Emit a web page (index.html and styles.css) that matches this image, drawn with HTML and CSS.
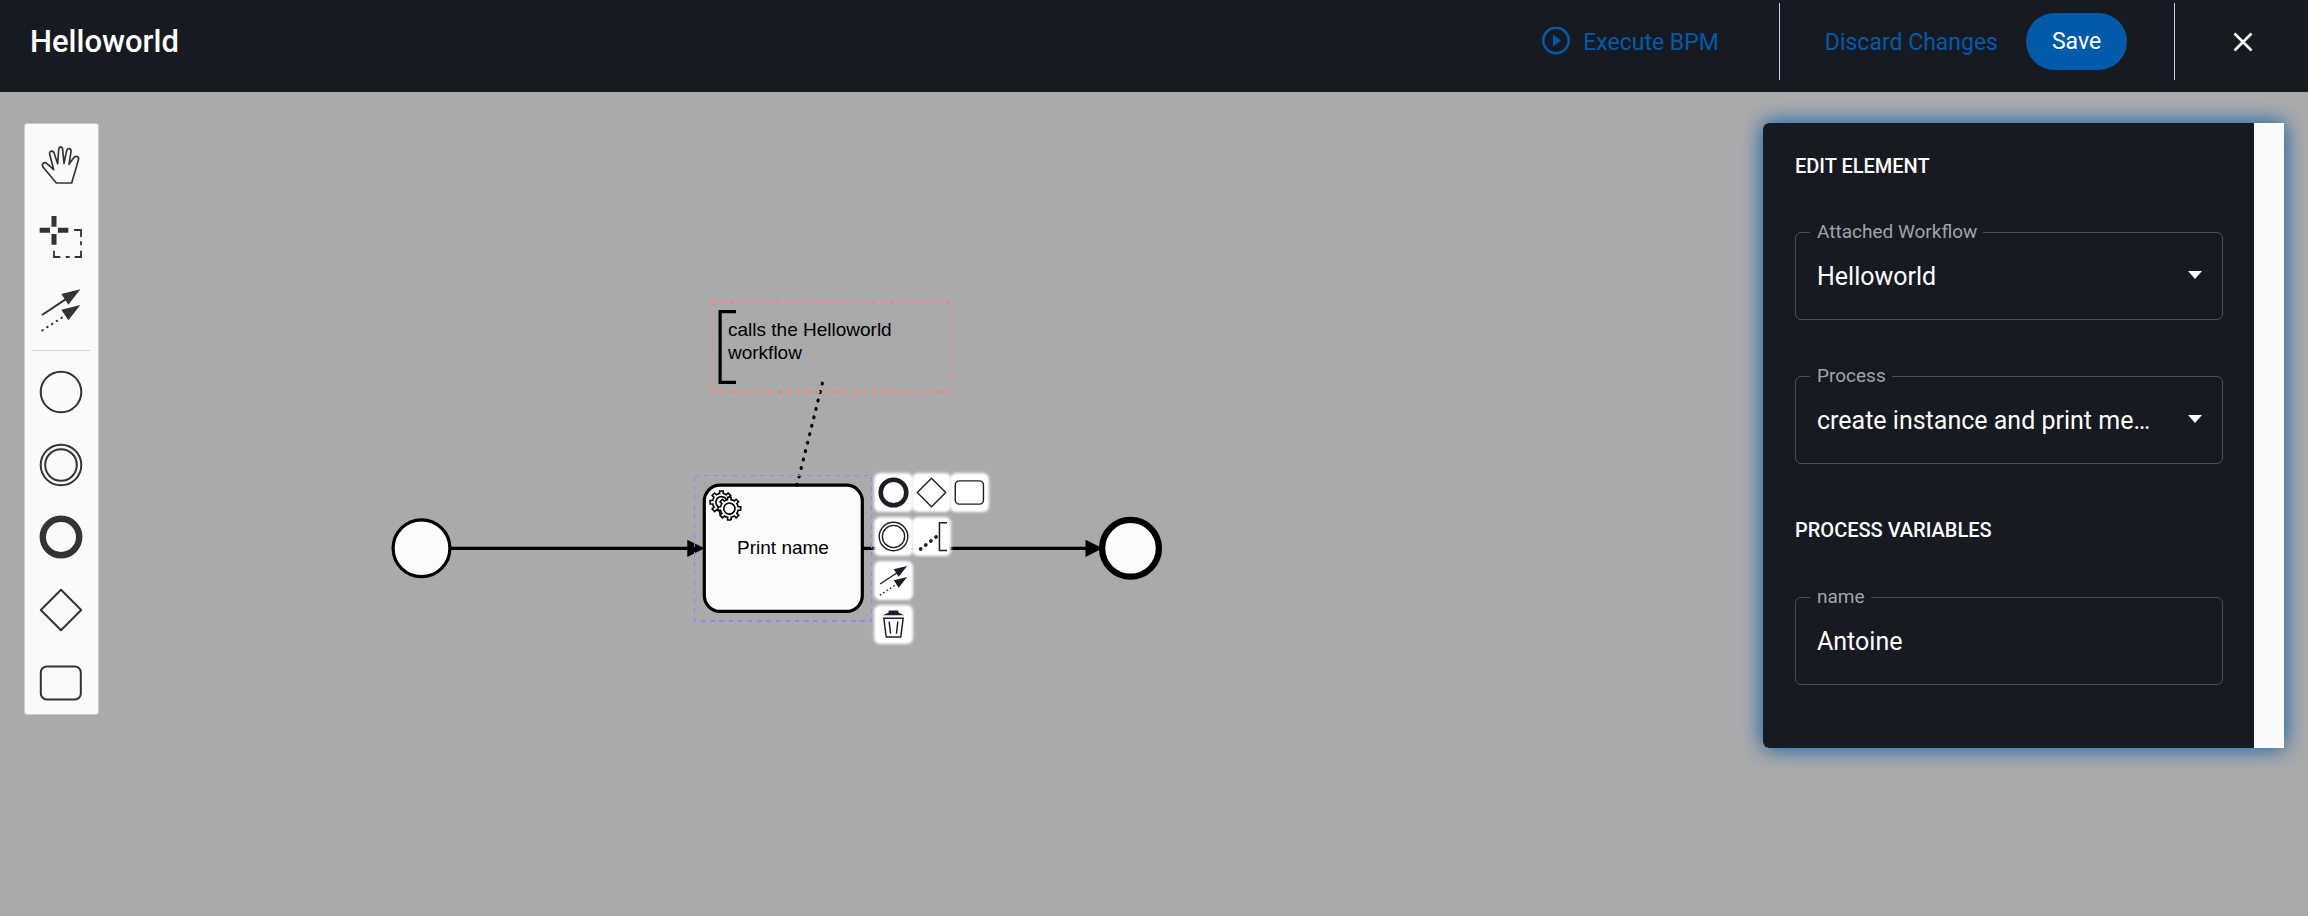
FILE: index.html
```html
<!DOCTYPE html>
<html lang="en">
<head>
<meta charset="utf-8">
<title>Helloworld</title>
<link rel="stylesheet" href="styles.css">
</head>
<body>
<svg class="defs" aria-hidden="true">
  <defs>
    <symbol id="i-end" viewBox="0 0 44 44"><circle cx="22" cy="22" r="18.2" fill="none" stroke="currentColor" stroke-width="6.4"/></symbol>
    <symbol id="i-start" viewBox="0 0 44 44"><circle cx="22" cy="22" r="20.3" fill="none" stroke="currentColor" stroke-width="2"/></symbol>
    <symbol id="i-mid" viewBox="0 0 44 44"><g fill="none" stroke="currentColor" stroke-width="2"><circle cx="22" cy="22" r="20.3"/><circle cx="22" cy="22" r="15.8"/></g></symbol>
    <symbol id="i-gateway" viewBox="0 0 44 44"><path d="M22 1.8 42.2 22 22 42.2 1.8 22Z" fill="none" stroke="currentColor" stroke-width="2" stroke-linejoin="round"/></symbol>
    <symbol id="i-task" viewBox="0 0 44 44"><rect x="1.8" y="5.5" width="40" height="33" rx="6" fill="none" stroke="currentColor" stroke-width="2"/></symbol>
    <symbol id="i-connect" viewBox="87 534 132 132">
      <path d="M96 615 170 566" fill="none" stroke="currentColor" stroke-width="6"/>
      <path d="M97 661 160 620" fill="none" stroke="currentColor" stroke-width="6" stroke-dasharray="2 15" stroke-linecap="round"/>
      <path d="M211 538 154 552 175 584ZM211 585 154 599 175 631Z" fill="currentColor"/>
    </symbol>
    <symbol id="gear" overflow="visible">
      <path d="m0,0 v-1.71335 c.352326,-.0705 .703932,-.17838 1.047628,-.32133 .344416,-.14465 .665822,-.32133 .966377,-.52145 l1.19431,1.18005 1.567487,-1.57688 -1.195028,-1.18014 c.403376,-.61394 .683079,-1.29908 .825447,-2.01824 l1.622133,-.01 v-2.2196 l-1.636514,.01 c-.07333,-.35153 -.178319,-.70024 -.323564,-1.04372 -.145244,-.34406 -.321407,-.6644 -.522735,-.96217 l1.131035,-1.13631 -1.583305,-1.56293 -1.129598,1.13589 c-.614052,-.40108 -1.302883,-.68093 -2.022633,-.82247 l.0093,-1.61852 h-2.241173 l.0042,1.63124 c-.353763,.0736 -.705369,.17977 -1.049785,.32371 -.344415,.14437 -.665102,.32092 -.9635006,.52006 l-1.1698628,-1.15823 -1.5667691,1.5792 1.1684265,1.15669 c-.4026573,.61283 -.68308,1.29797 -.8247287,2.01713 l-1.6588041,.003 v2.22174 l1.6724648,-.006 c.073327,.35077 .1797598,.70243 .3242851,1.04472 .1452428,.34448 .3214064,.6644 .5227339,.96066 l-1.1993431,1.19723 1.5840256,1.56011 1.1964668,-1.19348 c.6140517,.40346 1.3028827,.68232 2.0233517,.82331 l.000719,1.69892 h2.226848 z m.221462,-3.9957 c-1.788948,.7502 -3.8576,-.0928 -4.6097055,-1.87438 -.7521065,-1.78321 .090598,-3.84627 1.8802645,-4.59604 1.78823,-.74936 3.856881,.0929 4.608987,1.87437 .752106,1.78165 -.0906,3.84612 -1.879546,4.59605 z" fill="#fbfbfb" stroke="#000"/>
    </symbol>
  </defs>
</svg>

<header class="topbar">
  <h1 class="title">Helloworld</h1>
  <button class="link execute" type="button">
    <svg class="play" viewBox="0 0 30 30" aria-hidden="true"><circle cx="15" cy="13.5" r="12.7" fill="none" stroke="currentColor" stroke-width="2.6"/><path d="M12 7.5v12l8-6z" fill="currentColor"/></svg>
    Execute BPM
  </button>
  <span class="divider"></span>
  <button class="link discard" type="button">Discard Changes</button>
  <button class="save" type="button">Save</button>
  <span class="divider"></span>
  <button class="close" type="button" aria-label="Close">
    <svg viewBox="0 0 20 20" aria-hidden="true"><path d="M1.5 1.5l17 17M18.5 1.5l-17 17" stroke="currentColor" stroke-width="2.6"/></svg>
  </button>
</header>

<main class="canvas">
  <svg class="diagram" width="1200" height="640" viewBox="0 92 1200 640" role="img" aria-label="Process diagram">
    <g stroke="#000" stroke-width="3.2">
      <path d="M451 548.3H690M863 548.3H1088"/>
      <path d="M687.3 539.7V557L704.5 548.3ZM1085.5 539.7V557L1102.7 548.3Z" stroke="none"/>
      <circle class="node" cx="421.5" cy="548.3" r="28.4"/>
      <circle class="node" cx="1130.5" cy="548.3" r="28.4" stroke-width="6.3"/>
      <rect class="node" x="704.3" y="485.2" width="158" height="126.2" rx="15.8"/>
      <path d="M736 311.6H720.1V382.4H736" fill="none"/>
      <path d="M822.4 383.2 797 485" stroke-linecap="round" stroke-dasharray=".8 7.9"/>
    </g>
    <g transform="translate(704.3 485.2) scale(1.58)">
      <use href="#gear" x="12" y="18"/>
      <circle cx="15.9" cy="14.9" r="5.4" fill="#fbfbfb"/>
      <use href="#gear" x="17" y="22"/>
    </g>
    <rect class="outline" x="694.5" y="475.5" width="177" height="145.5"/>
    <rect class="outline outline-note" x="710.5" y="302" width="240" height="90"/>
    <text class="label" x="728" y="336">calls the Helloworld</text>
    <text class="label" x="728" y="359">workflow</text>
    <text class="label" x="783" y="554" text-anchor="middle">Print name</text>
  </svg>

  <div class="pad">
    <button type="button" aria-label="Append end event"><svg><use href="#i-end"/></svg></button>
    <button type="button" aria-label="Append gateway"><svg><use href="#i-gateway"/></svg></button>
    <button type="button" aria-label="Append task"><svg><use href="#i-task"/></svg></button>
    <button type="button" aria-label="Append intermediate event"><svg><use href="#i-mid"/></svg></button>
    <button type="button" aria-label="Append annotation"><svg viewBox="0 0 32 32"><path d="M32 1.8H24.2V30.5H32" fill="none" stroke="currentColor" stroke-width="1.6"/><path d="M4.8 28.9 22 15.5" stroke="currentColor" stroke-width="3.8" stroke-linecap="round" stroke-dasharray=".1 6.6" fill="none"/></svg></button>
    <button class="row-start" type="button" aria-label="Connect"><svg><use href="#i-connect"/></svg></button>
    <button class="row-start" type="button" aria-label="Remove"><svg viewBox="0 0 32 32"><path d="M5 6.5 11 3.5V1.5H21V3.5L27 6.5Z" fill="currentColor"/><path d="M6 9.5H26L23.5 29H8.5ZM11.5 13 13 25.5M20.5 13 19 25.5" fill="none" stroke="currentColor" stroke-width="1.5"/></svg></button>
  </div>

  <nav class="palette" aria-label="Tools">
    <div class="tools">
      <button type="button" aria-label="Hand tool"><svg viewBox="87 99 132 132"><path d="M139 219 99 171C93 160 104 154 111 161L131 179 119 133C117 121 130 120 133 131L143 161 146 119C147 108 157 108 158 119L162 160 170 122C173 112 184 115 183 125L177 163 190 145C197 134 209 140 205 151L185 219Z" fill="none" stroke="currentColor" stroke-width="5" stroke-linejoin="round"/></svg></button>
      <button type="button" aria-label="Lasso tool"><svg viewBox="87 315 132 132"><path d="M132 318V350M132 372V404M89 361H120M144 361H175" stroke="currentColor" stroke-width="15"/><path d="M192 360H213V381M213 394V406M213 422V441H194M179 441H167M151 441H132V422" fill="none" stroke="currentColor" stroke-width="5.5"/></svg></button>
      <button type="button" aria-label="Connect tool"><svg><use href="#i-connect"/></svg></button>
    </div>
    <hr class="rule">
    <div class="tools shapes">
      <button type="button" aria-label="Start event"><svg><use href="#i-start"/></svg></button>
      <button type="button" aria-label="Intermediate event"><svg><use href="#i-mid"/></svg></button>
      <button type="button" aria-label="End event"><svg><use href="#i-end"/></svg></button>
      <button type="button" aria-label="Gateway"><svg><use href="#i-gateway"/></svg></button>
      <button type="button" aria-label="Task"><svg><use href="#i-task"/></svg></button>
    </div>
  </nav>

  <aside class="panel">
    <form class="form">
      <h2 class="heading">Edit Element</h2>
      <fieldset class="field">
        <legend><label for="workflow">Attached Workflow</label></legend>
        <select id="workflow"><option>Helloworld</option></select>
      </fieldset>
      <fieldset class="field">
        <legend><label for="process">Process</label></legend>
        <select id="process"><option>create instance and print message</option></select>
      </fieldset>
      <h2 class="heading variables">Process Variables</h2>
      <fieldset class="field">
        <legend><label for="name">name</label></legend>
        <input id="name" type="text" value="Antoine">
      </fieldset>
    </form>
  </aside>
</main>
</body>
</html>
```
FILE: styles.css
```css
* { box-sizing: border-box; }
body {
  margin: 0;
  min-height: 100vh;
  display: flex;
  flex-direction: column;
  font-family: Roboto, "Liberation Sans", sans-serif;
  font-size: 23px;
  background: #aaa;
}
button { font: inherit; border: 0; padding: 0; background: none; color: inherit; cursor: pointer; }
svg { display: block; }
.defs { position: absolute; width: 0; height: 0; }

.topbar {
  display: flex;
  align-items: center;
  height: 92px;
  padding: 0 55px 9px 30px;
  background: #171a21;
  color: #fff;
}
.title { margin: 0 auto 0 0; font-size: 31px; font-weight: 500; }
.link { padding-top: 1px; color: #005aaa; white-space: nowrap; }
.execute { display: flex; align-items: center; gap: 12px; }
.play { width: 30px; height: 30px; }
.divider { width: 1px; height: 77px; background: #c3cbd8; }
.execute + .divider { margin: 0 45px 0 60px; }
.save {
  width: 101px;
  height: 57px;
  margin: 0 47px 0 28px;
  border-radius: 29px;
  background: #005aaa;
  color: #fff;
}
.close { margin-left: 58px; }
.close svg { width: 20px; height: 20px; }

.canvas {
  position: relative;
  flex: 1;
  display: flex;
  justify-content: space-between;
  align-items: flex-start;
  padding: 31px 24px;
}
.diagram { position: absolute; left: 0; top: 0; }
.node { fill: #fbfbfb; }
.outline { fill: none; stroke: #88f; stroke-width: 1.6; stroke-dasharray: 4.7 4.7; shape-rendering: crispEdges; }
.outline-note { stroke: #ff8080; }
.label { font-family: "Liberation Sans", Arial, sans-serif; font-size: 19px; }

.pad {
  position: absolute;
  left: 876px;
  top: 383px;
  display: grid;
  grid-template-columns: repeat(3, 35px);
  grid-auto-rows: 35px;
  gap: 9px 3px;
  color: #1b1f28;
}
.pad button {
  display: grid;
  place-items: center;
  border-radius: 4px;
  background: #fff;
  box-shadow: 0 0 3px 2px #fff;
}
.pad svg { width: 31px; height: 31px; }
.row-start { grid-column: 1; }

.palette {
  position: relative;
  width: 75px;
  padding-right: 1px;
  border: 1px solid #ccc;
  border-radius: 3px;
  background: #fafafa;
  color: #333;
}
.tools { display: grid; grid-auto-rows: 1fr; height: 217px; }
.shapes { height: 363px; }
.tools button { display: grid; place-items: center; padding-top: 10px; }
.tools svg { width: 44px; height: 44px; }
.rule { margin: 9px 7px 0; border: 0; border-top: 1px solid #d4d4d4; }

.panel {
  position: relative;
  width: 521px;
  padding-right: 30px;
  border-radius: 6px 0 0 6px;
  background: #fafafa;
  box-shadow: 0 0 22px #005aaa;
}
.form {
  display: flex;
  flex-direction: column;
  padding: 32px 31px 63px 32px;
  border-radius: 6px 0 0 6px;
  background: #171a21;
  color: #fff;
}
.heading { margin: 0 0 43px; font-size: 20px; line-height: 22px; font-weight: 500; text-transform: uppercase; }
.variables { margin: 11px 0 44px; }
.field {
  min-width: 0;
  height: 100px;
  margin: 0 0 44px;
  padding: 0 16px 0 14px;
  border: 1px solid #4b4d51;
  border-radius: 6px;
}
.field legend { padding: 0 6px 0 7px; color: #a2a3a6; font-size: 19px; line-height: 24px; }
.field select, .field input {
  display: block;
  width: 100%;
  height: 64px;
  padding: 0 48px 0 7px;
  border: 0;
  outline: 0;
  background: transparent;
  color: #fff;
  font-family: inherit;
  font-size: 25px;
  appearance: none;
  text-overflow: ellipsis;
}
.field select {
  background: url("data:image/svg+xml,%3Csvg xmlns='http://www.w3.org/2000/svg' width='14' height='8'%3E%3Cpath d='M0 0h14L7 8z' fill='%23fff'/%3E%3C/svg%3E") no-repeat right 4px top 27px;
}
.field:last-child { margin-bottom: 0; }
```
